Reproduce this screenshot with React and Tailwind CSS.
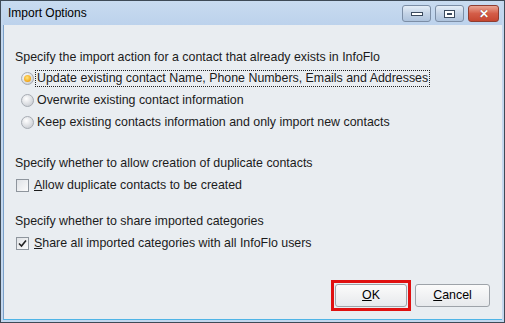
import React, { useState } from 'react';

const font = { fontFamily: '"Liberation Sans", Arial, sans-serif' };

function Radio({ checked }) {
  return (
    <svg width="13" height="13" viewBox="0 0 13 13" className="shrink-0">
      <defs>
        <radialGradient id="rg" cx="0.4" cy="0.35" r="0.7">
          <stop offset="0" stopColor="#ffffff" />
          <stop offset="1" stopColor="#c8ccd2" />
        </radialGradient>
        <radialGradient id="og" cx="0.45" cy="0.4" r="0.6">
          <stop offset="0" stopColor="#ffe680" />
          <stop offset="1" stopColor="#f0a010" />
        </radialGradient>
      </defs>
      <circle cx="6.5" cy="6.5" r="6" fill="url(#rg)" stroke="#a7acb3" />
      {checked && <circle cx="6.5" cy="6.5" r="3.5" fill="url(#og)" />}
    </svg>
  );
}

function Check({ checked }) {
  return (
    <div className="w-[13px] h-[13px] shrink-0 border border-[#8e959d] bg-gradient-to-br from-[#dfe2e6] to-[#fbfbfb] flex items-center justify-center">
      {checked && (
        <svg width="9" height="9" viewBox="0 0 9 9">
          <path d="M1 4.5 L3.5 7 L8 1.5" fill="none" stroke="#222" strokeWidth="1.6" />
        </svg>
      )}
    </div>
  );
}

function WinButton({ children, red }) {
  return (
    <div
      className={`h-[17px] rounded-[3px] border flex items-center justify-center ${
        red
          ? 'w-[31px] border-[#8f3d31] bg-gradient-to-b from-[#e9a594] via-[#d45d48] to-[#c64630]'
          : 'w-[29px] border-[#7c8ea6] bg-gradient-to-b from-[#e5edf7] via-[#c4d3e6] to-[#aec3dd]'
      }`}
    >
      {children}
    </div>
  );
}

function Button({ children, w }) {
  return (
    <div className={`${w} h-[23px] rounded-[3px] border border-[#9ea3a9] bg-gradient-to-b from-[#fbfbfb] to-[#e7e9ec] flex items-center justify-center text-[12.4px] text-black`}>
      {children}
    </div>
  );
}

export default function App() {
  const [action] = useState(0);
  const options = [
    'Update existing contact Name, Phone Numbers, Emails and Addresses',
    'Overwrite existing contact information',
    'Keep existing contacts information and only import new contacts',
  ];

  return (
    <div className="w-[505px] h-[323px] bg-[#3e4a57] p-px" style={font}>
      <div className="w-full h-full flex flex-col bg-[#c3d7ee] px-[2px] pb-[2px]">
        {/* Title bar */}
        <div className="h-[24px] flex items-center justify-between pl-[5px] pr-[3px] bg-gradient-to-b from-[#c8dbf0] to-[#bcd2ec]">
          <span className="text-[12px] text-black">Import Options</span>
          <div className="flex gap-[4px] items-center pt-px">
            <WinButton>
              <div className="w-[12px] h-[4px] border border-[#3b4a5e] bg-white" />
            </WinButton>
            <WinButton>
              <div className="w-[11px] h-[8px] border border-[#3b4a5e] bg-white flex items-center justify-center">
                <div className="w-[5px] h-[2px] bg-[#3b4a5e]" />
              </div>
            </WinButton>
            <WinButton red>
              <span className="text-white font-bold text-[12px] leading-none" style={{ textShadow: '0 0 1px #5a1a10' }}>✕</span>
            </WinButton>
          </div>
        </div>

        {/* Body */}
        <div className="flex-1 flex flex-col bg-[#e9edf1] border-l border-[#7aa0c9] text-[12.4px] text-[#1b1b1b] pt-[24px] pl-[11px]">
          <div className="h-[16px] leading-[16px]">Specify the import action for a contact that already exists in InfoFlo</div>
          <div className="flex flex-col gap-[5px] mt-[5px] pl-[6px]">
            {options.map((label, i) => (
              <div key={i} className="flex items-center gap-[2px] h-[17px]">
                <Radio checked={action === i} />
                <span
                  className={`leading-[15px] px-px ${
                    i === 0 ? 'outline outline-1 outline-dotted outline-[#222]' : ''
                  }`}
                >
                  {label}
                </span>
              </div>
            ))}
          </div>

          <div className="h-[16px] leading-[16px] mt-[24px]">Specify whether to allow creation of duplicate contacts</div>
          <div className="flex items-center gap-[5px] h-[16px] mt-[6px] pl-[1px]">
            <Check />
            <span>
              <span className="underline">A</span>llow duplicate contacts to be created
            </span>
          </div>

          <div className="h-[16px] leading-[16px] mt-[20px]">Specify whether to share imported categories</div>
          <div className="flex items-center gap-[5px] h-[16px] mt-[6px] pl-[1px]">
            <Check checked />
            <span>
              <span className="underline">S</span>hare all imported categories with all InfoFlo users
            </span>
          </div>

          <div className="flex-1" />
          <div className="flex justify-end items-center gap-[4px] pr-[12px] pb-[8px]">
            <div className="border-[3px] border-[#e01010] p-px">
              <Button w="w-[72px]">
                <span className="underline">O</span>K
              </Button>
            </div>
            <Button w="w-[75px]">
              <span className="underline">C</span>ancel
            </Button>
          </div>
        </div>
        <div className="h-px bg-[#4fb4e6]" />
      </div>
    </div>
  );
}
